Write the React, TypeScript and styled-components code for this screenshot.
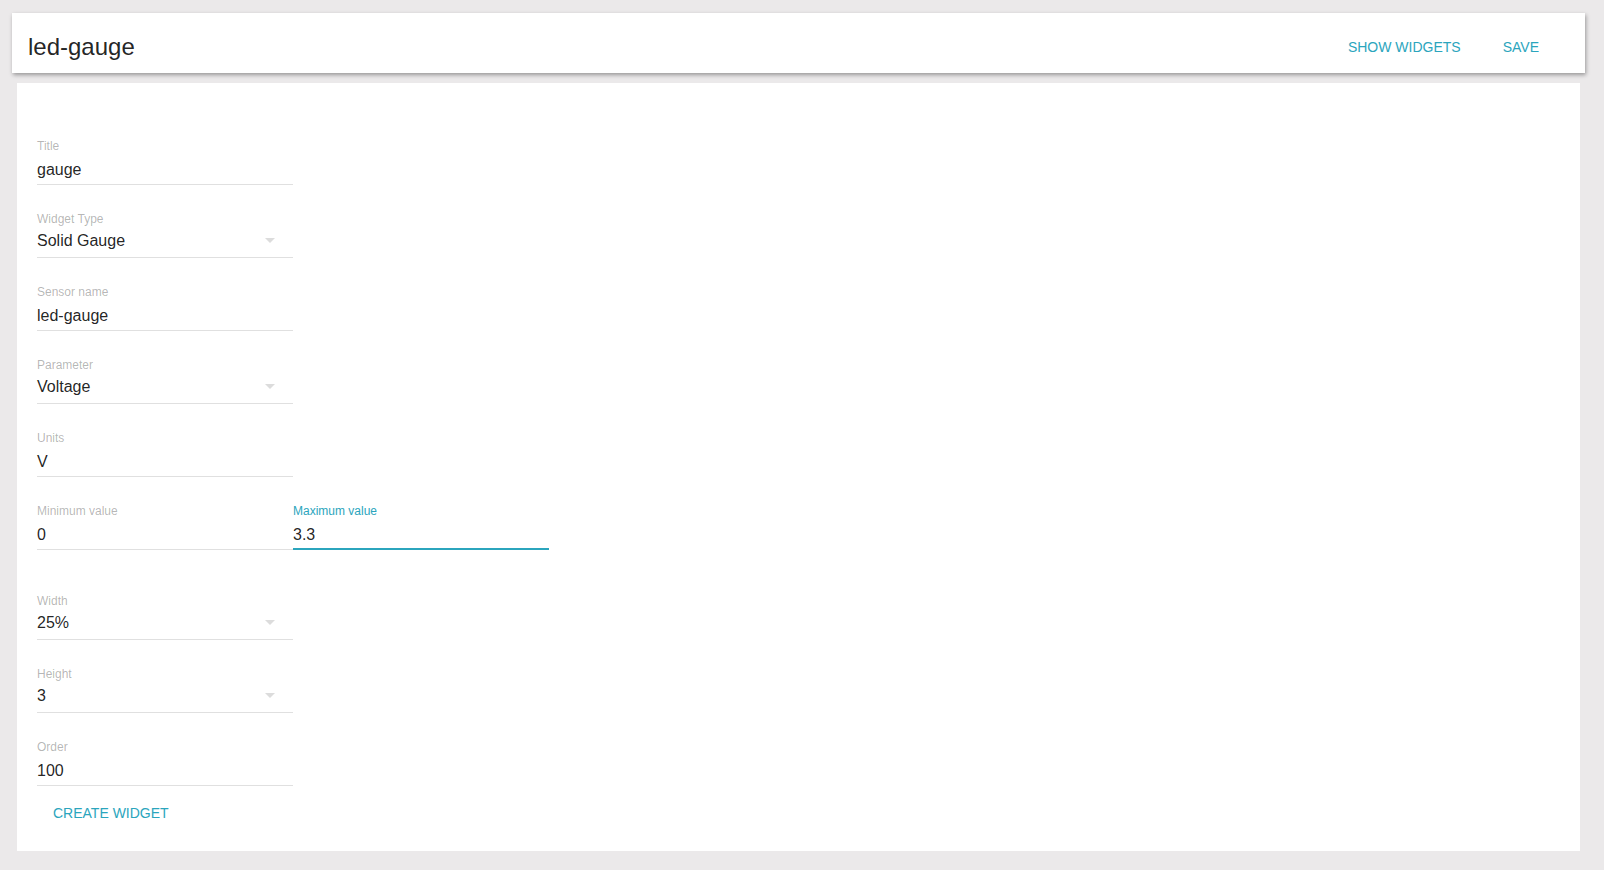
import React from "react";
import styled, { createGlobalStyle } from "styled-components";

const accent = "#2ba5bd";

const GlobalStyle = createGlobalStyle`
  html, body {
    margin: 0;
    padding: 0;
    background: #ebe9ea;
    font-family: "Liberation Sans", Arial, sans-serif;
  }
`;

const Page = styled.div`
  min-height: 870px;
  padding: 13px 19px 19px 12px;
  box-sizing: border-box;
`;

const Header = styled.header`
  height: 60px;
  box-sizing: border-box;
  padding: 8px 30px 0 16px;
  display: flex;
  align-items: center;
  background: #fff;
  box-shadow: 1px 2px 4px rgba(0, 0, 0, 0.35);
`;

const Title = styled.h1`
  flex: 1;
  margin: 0;
  font-size: 24px;
  font-weight: 400;
  line-height: 52px;
  color: rgba(0, 0, 0, 0.87);
`;

const Actions = styled.div`
  display: flex;
  gap: 10px;
`;

const FlatButton = styled.button`
  height: 36px;
  padding: 0 16px;
  border: none;
  background: transparent;
  font-family: inherit;
  font-size: 14px;
  line-height: 36px;
  text-transform: uppercase;
  color: ${accent};
  cursor: pointer;
`;

const Card = styled.main`
  margin: 10px 5px 0 5px;
  padding: 55px 20px 20px 20px;
  background: #fff;
`;

// margin collapses with the next field's 26px top margin
const FieldRow = styled.div`
  display: flex;
  margin-bottom: 43px;
`;

const FieldBox = styled.div<{ $first?: boolean; $focused?: boolean }>`
  width: 256px;
  margin-top: ${(p) => (p.$first ? "0" : "26px")};
  border-bottom: 1px solid #e0e0e0;
  position: relative;

  ${(p) =>
    p.$focused &&
    `
    &::after {
      content: "";
      position: absolute;
      left: 0;
      right: 0;
      bottom: -1px;
      height: 2px;
      background: ${accent};
    }
  `}
`;

const Label = styled.div<{ $focused?: boolean }>`
  font-size: 12px;
  line-height: 16px;
  color: ${(p) => (p.$focused ? accent : "rgba(0, 0, 0, 0.3)")};
`;

const Value = styled.div<{ $select?: boolean }>`
  display: flex;
  align-items: center;
  justify-content: space-between;
  height: 24px;
  margin-top: ${(p) => (p.$select ? "2px" : "4px")};
  padding-bottom: ${(p) => (p.$select ? "4px" : "2px")};
  font-size: 16px;
  line-height: 24px;
  color: rgba(0, 0, 0, 0.87);
`;

const Arrow = styled.svg`
  width: 24px;
  height: 24px;
  margin: -2px 11px 0 0;
  fill: #dcdcdc;
`;

const CreateButton = styled(FlatButton)`
  display: block;
  margin-top: 9px;
`;

interface FieldProps {
  label: string;
  value: string;
  select?: boolean;
  focused?: boolean;
  first?: boolean;
}

const Field: React.FC<FieldProps> = ({ label, value, select, focused, first }) => (
  <FieldBox $first={first} $focused={focused}>
    <Label $focused={focused}>{label}</Label>
    <Value $select={select}>
      <span>{value}</span>
      {select && (
        <Arrow viewBox="0 0 24 24">
          <path d="M7 10l5 5 5-5z" />
        </Arrow>
      )}
    </Value>
  </FieldBox>
);

const App: React.FC = () => {
  return (
    <>
      <GlobalStyle />
      <Page>
        <Header>
          <Title>led-gauge</Title>
          <Actions>
            <FlatButton>Show widgets</FlatButton>
            <FlatButton>Save</FlatButton>
          </Actions>
        </Header>
        <Card>
          <Field first label="Title" value="gauge" />
          <Field label="Widget Type" value="Solid Gauge" select />
          <Field label="Sensor name" value="led-gauge" />
          <Field label="Parameter" value="Voltage" select />
          <Field label="Units" value="V" />
          <FieldRow>
            <Field label="Minimum value" value="0" />
            <Field label="Maximum value" value="3.3" focused />
          </FieldRow>
          <Field label="Width" value="25%" select />
          <Field label="Height" value="3" select />
          <Field label="Order" value="100" />
          <CreateButton>Create widget</CreateButton>
        </Card>
      </Page>
    </>
  );
};

export default App;
